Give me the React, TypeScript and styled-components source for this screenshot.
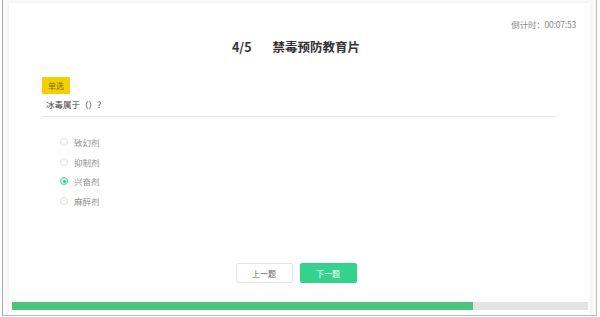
import React, { useState } from "react";
import styled, { createGlobalStyle } from "styled-components";

const Global = createGlobalStyle`
  html, body { margin: 0; padding: 0; background: #fff; }
  body { font-family: "Noto Sans CJK SC", "Noto Sans", sans-serif; }
  * { box-sizing: border-box; }
`;

const Frame = styled.div`
  width: 595px;
  height: 316px;
  margin-left: 2px;
  border-left: 1px solid #a8a8a8;
  border-right: 1px solid #bdbdbd;
  border-bottom: 1px solid #bdbdbd;
  background: #fafafa;
  padding: 3px 6px 0 6px;
  display: flex;
  flex-direction: column;
`;

const Card = styled.div`
  flex: 1;
  background: #fff;
  box-shadow: 0 0 4px rgba(0, 0, 0, 0.06);
  display: flex;
  flex-direction: column;
  padding: 15px 11px 0 4px;
`;

const Timer = styled.div`
  align-self: flex-end;
  margin-right: 3px;
  font-size: 8.5px;
  color: #8a8a8a;
  line-height: 12px;
  letter-spacing: -0.2px;
`;

const Title = styled.h1`
  margin: 8px 0 0 0;
  text-align: center;
  font-size: 12.5px;
  font-weight: 700;
  color: #333;
  line-height: 18px;
`;

const Gap = styled.span`
  display: inline-block;
  width: 21px;
`;

const Question = styled.div`
  margin: 21px 24px 0 29px;
  display: flex;
  flex-direction: column;
  align-items: flex-start;
`;

const Badge = styled.span`
  background: #f5d000;
  color: #7a6a10;
  font-size: 8px;
  line-height: 17px;
  padding: 0 6px;
  border-radius: 1px;
`;

const Stem = styled.div`
  align-self: stretch;
  font-size: 8.5px;
  color: #444;
  line-height: 14px;
  padding: 3px 0 5px 4px;
  border-bottom: 1px solid #e2e2e2;
`;

const Options = styled.div`
  display: flex;
  flex-direction: column;
  gap: 5.7px;
  margin: 18px 0 0 47px;
`;

const Option = styled.label`
  display: flex;
  align-items: center;
  gap: 6px;
  font-size: 8.5px;
  color: #8f8f8f;
  line-height: 14px;
  cursor: pointer;
`;

const Radio = styled.span<{ $checked: boolean }>`
  width: 8px;
  height: 8px;
  border-radius: 50%;
  border: 1px solid ${(p) => (p.$checked ? "#4cd49a" : "#dedede")};
  background: ${(p) => (p.$checked ? "#dff7ec" : "#fff")};
  display: flex;
  align-items: center;
  justify-content: center;
  &::after {
    content: "";
    width: 3px;
    height: 3px;
    border-radius: 50%;
    background: ${(p) => (p.$checked ? "#2ec784" : "transparent")};
  }
`;

const Buttons = styled.div`
  margin-top: auto;
  display: flex;
  justify-content: center;
  gap: 7px;
`;

const Button = styled.button<{ $primary?: boolean }>`
  width: 57px;
  height: 20px;
  border-radius: 2px;
  font-family: inherit;
  font-size: 8px;
  border: 1px solid ${(p) => (p.$primary ? "#34d28c" : "#e3e3e3")};
  background: ${(p) => (p.$primary ? "#34d28c" : "#fff")};
  color: ${(p) => (p.$primary ? "#fff" : "#666")};
  padding: 0;
`;

const Progress = styled.div`
  margin: 19px -9px 5px -1px;
  height: 8px;
  background: #e3e3e3;
`;

const Fill = styled.div`
  height: 100%;
  background: #4cc57a;
`;

const options = ["致幻剂", "抑制剂", "兴奋剂", "麻醉剂"];

export default function App() {
  const [sel, setSel] = useState(2);
  return (
    <>
      <Global />
      <Frame>
        <Card>
          <Timer>倒计时：00:07:53</Timer>
          <Title>
            4/5<Gap />禁毒预防教育片
          </Title>
          <Question>
            <Badge>单选</Badge>
            <Stem>冰毒属于（）？</Stem>
          </Question>
          <Options>
            {options.map((o, i) => (
              <Option key={o} onClick={() => setSel(i)}>
                <Radio $checked={sel === i} />
                {o}
              </Option>
            ))}
          </Options>
          <Buttons>
            <Button>上一题</Button>
            <Button $primary>下一题</Button>
          </Buttons>
          <Progress>
            <Fill style={{ width: `${(460 / 575) * 100}%` }} />
          </Progress>
        </Card>
      </Frame>
    </>
  );
}
